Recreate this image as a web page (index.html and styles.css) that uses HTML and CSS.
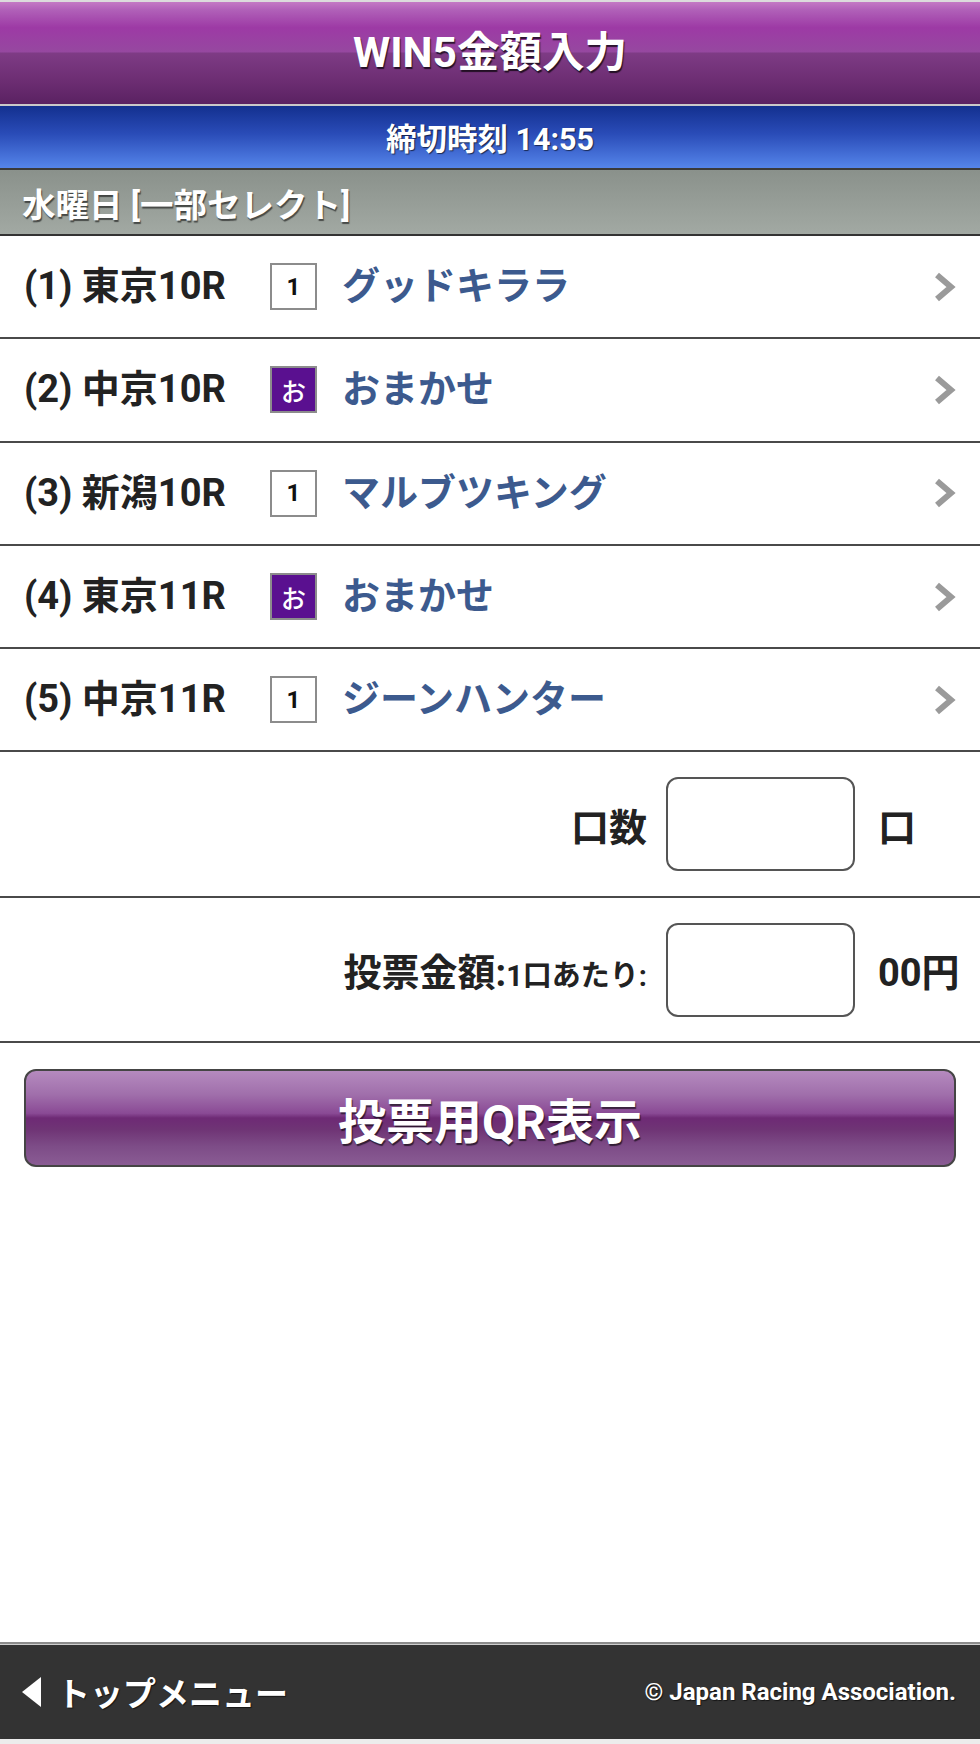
FILE: index.html
```html
<!DOCTYPE html>
<html lang="ja">
<head>
<meta charset="utf-8">
<title>WIN5金額入力</title>
<link rel="stylesheet" href="styles.css">
</head>
<body>
<div class="page">
  <header class="title-bar"><h1 class="title">WIN5金額入力</h1></header>
  <div class="deadline-bar">締切時刻 14:55</div>
  <div class="day-bar">水曜日 [一部セレクト]</div>

  <ul class="races">
    <li class="race">
      <span class="race-label">(1) 東京10R</span>
      <span class="pick">1</span>
      <span class="horse">グッドキララ</span>
      <svg class="chev" width="22" height="30" viewBox="0 0 22 30"><path d="M3 3 L17 15 L3 27" fill="none" stroke="#9a9a9a" stroke-width="6"/></svg>
    </li>
    <li class="race">
      <span class="race-label">(2) 中京10R</span>
      <span class="pick pick-auto">お</span>
      <span class="horse">おまかせ</span>
      <svg class="chev" width="22" height="30" viewBox="0 0 22 30"><path d="M3 3 L17 15 L3 27" fill="none" stroke="#9a9a9a" stroke-width="6"/></svg>
    </li>
    <li class="race">
      <span class="race-label">(3) 新潟10R</span>
      <span class="pick">1</span>
      <span class="horse">マルブツキング</span>
      <svg class="chev" width="22" height="30" viewBox="0 0 22 30"><path d="M3 3 L17 15 L3 27" fill="none" stroke="#9a9a9a" stroke-width="6"/></svg>
    </li>
    <li class="race">
      <span class="race-label">(4) 東京11R</span>
      <span class="pick pick-auto">お</span>
      <span class="horse">おまかせ</span>
      <svg class="chev" width="22" height="30" viewBox="0 0 22 30"><path d="M3 3 L17 15 L3 27" fill="none" stroke="#9a9a9a" stroke-width="6"/></svg>
    </li>
    <li class="race">
      <span class="race-label">(5) 中京11R</span>
      <span class="pick">1</span>
      <span class="horse">ジーンハンター</span>
      <svg class="chev" width="22" height="30" viewBox="0 0 22 30"><path d="M3 3 L17 15 L3 27" fill="none" stroke="#9a9a9a" stroke-width="6"/></svg>
    </li>
  </ul>

  <div class="amount-row">
    <span class="amount-label">口数</span>
    <input class="amount-input" type="text">
    <span class="amount-unit">口</span>
  </div>
  <div class="amount-row">
    <span class="amount-label">投票金額:<small class="amount-sub">1口あたり:</small></span>
    <input class="amount-input" type="text">
    <span class="amount-unit">00円</span>
  </div>

  <div class="action">
    <button class="qr-button" type="button">投票用QR表示</button>
  </div>

  <footer class="footer">
    <a class="back-link" href="#"><span class="back-arrow"></span>トップメニュー</a>
    <span class="copyright">© Japan Racing Association.</span>
  </footer>
</div>
</body>
</html>
```

FILE: styles.css
```css
* { box-sizing: border-box; }

html, body {
  margin: 0;
  padding: 0;
  background: #fff;
}

body {
  font-family: Roboto, "Noto Sans CJK JP", "Noto Sans", sans-serif;
  font-weight: 700;
  color: #222;
}

.page {
  display: flex;
  flex-direction: column;
  min-height: 1744px;
}

.title-bar {
  height: 106px;
  border-top: 2px solid #dcdcdc;
  border-bottom: 2px solid #c9c9c9;
  background: linear-gradient(to bottom, #c47ac4 0%, #b060b8 8%, #9d3aa5 25%, #9648a0 49%, #7e3b85 50%, #6c2d72 78%, #5a2262 100%);
  display: flex;
  align-items: center;
  justify-content: center;
}

.title {
  margin: 0;
  font-size: 42.5px;
  font-weight: 700;
  color: #fff;
  text-shadow: 1px 2px 1px rgba(0,0,0,0.7);
  line-height: 1;
}

.deadline-bar {
  height: 64px;
  border-bottom: 2px solid #3a3a3a;
  background: linear-gradient(to bottom, #13308f 0%, #2a4cb8 45%, #5585ea 100%);
  color: #fff;
  font-size: 30.5px;
  display: flex;
  align-items: center;
  justify-content: center;
  text-shadow: 1px 1px 1px rgba(0,0,0,0.6);
}

.day-bar {
  height: 66px;
  border-bottom: 2px solid #333;
  background: linear-gradient(to bottom, #8a918b 0%, #a2a9a3 100%);
  color: #fff;
  font-size: 33.5px;
  padding-left: 22px;
  display: flex;
  align-items: center;
  text-shadow: 1px 2px 1px rgba(0,0,0,0.55);
}

.races {
  list-style: none;
  margin: 0;
  padding: 0;
}

.race {
  height: 103.3px;
  border-bottom: 2px solid #4a4a4a;
  display: flex;
  align-items: center;
  padding: 0 24px;
}

.race-label {
  width: 246px;
  font-size: 38px;
  color: #222;
  margin-top: -8px;
}

.pick {
  width: 47px;
  height: 47px;
  border: 2px solid #8c8c8c;
  background: #fff;
  color: #111;
  font-size: 24px;
  display: flex;
  align-items: center;
  justify-content: center;
  margin-right: 25px;
}

.pick-auto {
  background: #5a1090;
  color: #fff;
  font-size: 25px;
  font-weight: 500;
}

.horse {
  flex: 1;
  font-size: 38px;
  font-weight: 700;
  color: #3c5a8e;
  margin-top: -8px;
}

.chev {
  display: block;
  flex: none;
}

.amount-row {
  height: 145.5px;
  border-bottom: 2px solid #4a4a4a;
  display: flex;
  align-items: center;
  justify-content: flex-end;
  padding-right: 24px;
}

.amount-label {
  font-size: 38px;
  color: #222;
  margin-right: 19px;
  white-space: nowrap;
}

.amount-sub {
  font-size: 29px;
}

.amount-input {
  flex: none;
  width: 189px;
  height: 94px;
  border: 2px solid #555;
  border-radius: 12px;
  background: #fff;
  margin: 0;
}

.amount-unit {
  flex: none;
  width: 78px;
  margin-left: 23px;
  font-size: 38px;
  color: #222;
  white-space: nowrap;
}

.action {
  padding: 26px 24px 0;
}

.qr-button {
  width: 100%;
  height: 98px;
  border: 2px solid #454545;
  border-radius: 12px;
  background: linear-gradient(to bottom, #b58abf 0%, #a06fab 25%, #8a4a95 45%, #6e2a75 50%, #6f3475 62%, #7d4c87 80%, #8a5c94 100%);
  color: #fff;
  font-family: Roboto, "Noto Sans CJK JP", sans-serif;
  font-weight: 700;
  font-size: 48px;
  text-shadow: 1px 2px 1px rgba(0,0,0,0.6);
  padding: 0;
  cursor: pointer;
}

.footer {
  margin-top: auto;
  height: 102px;
  border-top: 2px solid #8c8c8c;
  border-bottom: 5px solid #ececec;
  box-shadow: inset 0 1px 0 #cfcfcf;
  background: #333;
  display: flex;
  align-items: center;
  justify-content: space-between;
  padding: 0 24px 0 22px;
  color: #fff;
}

.back-link {
  display: flex;
  align-items: center;
  color: #fff;
  text-decoration: none;
  font-size: 33px;
  text-shadow: 1px 1px 1px rgba(0,0,0,0.6);
}

.back-arrow {
  width: 0;
  height: 0;
  border-top: 15px solid transparent;
  border-bottom: 15px solid transparent;
  border-right: 19px solid #fff;
  margin-right: 16px;
}

.copyright {
  font-family: Roboto, sans-serif;
  font-size: 24px;
  font-weight: 700;
  text-shadow: 1px 1px 1px rgba(0,0,0,0.6);
}
```
